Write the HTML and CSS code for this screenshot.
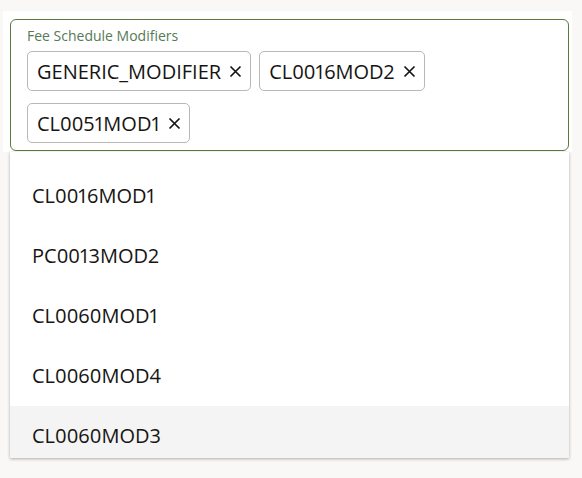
FILE: index.html
```html
<!DOCTYPE html>
<html>
<head>
<meta charset="utf-8">
<link rel="stylesheet" href="styles.css">
</head>
<body>
<div class="stage">
  <div class="panel">
    <div class="field">
      <div class="label">Fee Schedule Modifiers</div>
      <div class="chips">
        <span class="chip">GENERIC_MODIFIER<svg class="x" viewBox="0 0 13 13"><path d="M1.5 1.5 L11.5 11.5 M11.5 1.5 L1.5 11.5"/></svg></span>
        <span class="chip">CL0016MOD2<svg class="x" viewBox="0 0 13 13"><path d="M1.5 1.5 L11.5 11.5 M11.5 1.5 L1.5 11.5"/></svg></span>
        <span class="chip">CL0051MOD1<svg class="x" viewBox="0 0 13 13"><path d="M1.5 1.5 L11.5 11.5 M11.5 1.5 L1.5 11.5"/></svg></span>
      </div>
    </div>
  </div>
  <ul class="dropdown">
    <li class="item">CL0016MOD1</li>
    <li class="item">PC0013MOD2</li>
    <li class="item">CL0060MOD1</li>
    <li class="item">CL0060MOD4</li>
    <li class="item active">CL0060MOD3</li>
  </ul>
</div>
</body>
</html>
```

FILE: styles.css
```css
html, body {
  margin: 0;
  padding: 0;
  background: #f9f8f6;
  font-family: "Open Sans", "Noto Sans", sans-serif;
  font-variant-numeric: proportional-nums;
  color: #161513;
}
.stage {
  position: relative;
  width: 582px;
  height: 478px;
}
.panel {
  position: absolute;
  left: 3px;
  top: 11px;
  width: 569px;
  height: 141px;
  background: #ffffff;
  box-sizing: border-box;
  padding: 8px 3px 0 7px;
}
.field {
  border: 1px solid #5b7a3d;
  border-radius: 6px;
  height: 132px;
  box-sizing: border-box;
  padding: 6px 8px 0 16px;
}
.label {
  font-size: 14px;
  line-height: 19px;
  color: #557a55;
}
.chips {
  display: flex;
  flex-wrap: wrap;
  column-gap: 8px;
  row-gap: 12px;
  margin-top: 6px;
}
.chip {
  display: inline-flex;
  align-items: center;
  height: 40px;
  box-sizing: border-box;
  border: 1px solid #b9b8b5;
  border-radius: 5px;
  padding: 0 8px 0 9px;
  font-size: 20px;
  gap: 8px;
}
.x {
  width: 13px;
  height: 13px;
  fill: none;
  stroke: #161513;
  stroke-width: 1.7;
}
.dropdown {
  position: absolute;
  left: 10px;
  top: 152px;
  width: 559px;
  height: 306px;
  margin: 0;
  padding: 14px 0 0 0;
  box-sizing: border-box;
  list-style: none;
  background: #ffffff;
  overflow: hidden;
  box-shadow: 0 1px 3px rgba(0, 0, 0, 0.3);
}
.item {
  height: 60px;
  line-height: 60px;
  font-size: 20px;
  padding-left: 22px;
}
.item.active {
  background: #f4f4f4;
}
```
